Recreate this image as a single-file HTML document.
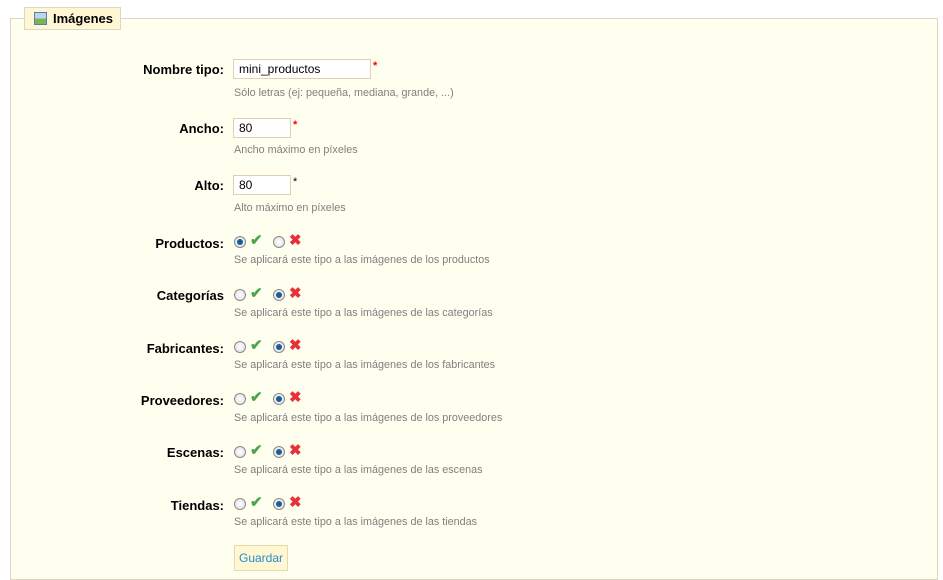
<!DOCTYPE html>
<html><head><meta charset="utf-8"><style>
body{margin:0;width:943px;height:570px;background:#fff;font-family:"Liberation Sans",Arial,sans-serif;position:relative;overflow:hidden}
.fs{position:absolute;left:10px;top:18px;width:926px;height:560px;border:1px solid #dfd5c3;background:#fffff0}
.lg{position:absolute;left:24px;top:7px;width:95px;height:21px;border:1px solid #dfd5c3;background:#fff6d3;font-weight:bold;font-size:13px;color:#000}
.lg span{position:absolute;left:28px;top:3px}
.ic{position:absolute;left:9px;top:4px;width:11px;height:11px;border:1px solid #5a7ea8;background:linear-gradient(#bcd6ef 50%,#7fb35a 50%)}
.l{position:absolute;right:719px;font-weight:bold;font-size:13px;color:#000;white-space:nowrap}
.h{position:absolute;left:234px;font-size:10.8px;color:#7f7f7f;white-space:nowrap}
.in{position:absolute;left:233px;height:18px;border:1px solid #e0d0b1;background:#fff;font-size:12px;line-height:18px;padding-left:5px;box-sizing:content-box}
.st{position:absolute;color:#f00;font-size:11px;font-weight:bold}
.r{position:absolute;width:10px;height:10px;border-radius:50%;border:1px solid #8a8a8a;background:radial-gradient(#fff,#ddd)}
.r.on::after{content:"";position:absolute;left:2px;top:2px;width:6px;height:6px;border-radius:50%;background:#1a5d9a}
.ok{position:absolute;color:#4aa64a;font-size:15px;font-weight:bold}
.no{position:absolute;color:#e8303a;font-size:15px;font-weight:bold}
.btn{position:absolute;left:234px;top:545px;width:52px;height:24px;border:1px solid #e8d9a8;background:#fff6d3;color:#268ccd;font-size:12px;line-height:24px;text-align:center}
</style></head><body>
<div class="fs"></div>
<div class="lg"><div class="ic"></div><span>Imágenes</span></div>

<div class="l" style="top:62px">Nombre tipo:</div>
<div class="in" style="top:59px;width:131px">mini_productos</div>
<div class="st" style="left:373px;top:60px">*</div>
<div class="h" style="top:87px">Sólo letras (ej: pequeña, mediana, grande, ...)</div>

<div class="l" style="top:121px">Ancho:</div>
<div class="in" style="top:118px;width:51px">80</div>
<div class="st" style="left:293px;top:119px">*</div>
<div class="h" style="top:144px">Ancho máximo en píxeles</div>

<div class="l" style="top:178px">Alto:</div>
<div class="in" style="top:175px;width:51px">80</div>
<div class="st" style="left:293px;top:176px;color:#000;font-weight:normal">*</div>
<div class="h" style="top:202px">Alto máximo en píxeles</div>

<div class="l" style="top:236px">Productos:</div>
<div class="r on" style="left:234px;top:236px"></div><div class="ok" style="left:250px;top:231px">✔</div>
<div class="r" style="left:273px;top:236px"></div><div class="no" style="left:289px;top:231px">✖</div>
<div class="h" style="top:254px">Se aplicará este tipo a las imágenes de los productos</div>

<div class="l" style="top:288px">Categorías</div>
<div class="r" style="left:234px;top:289px"></div><div class="ok" style="left:250px;top:284px">✔</div>
<div class="r on" style="left:273px;top:289px"></div><div class="no" style="left:289px;top:284px">✖</div>
<div class="h" style="top:307px">Se aplicará este tipo a las imágenes de las categorías</div>

<div class="l" style="top:341px">Fabricantes:</div>
<div class="r" style="left:234px;top:341px"></div><div class="ok" style="left:250px;top:336px">✔</div>
<div class="r on" style="left:273px;top:341px"></div><div class="no" style="left:289px;top:336px">✖</div>
<div class="h" style="top:359px">Se aplicará este tipo a las imágenes de los fabricantes</div>

<div class="l" style="top:393px">Proveedores:</div>
<div class="r" style="left:234px;top:393px"></div><div class="ok" style="left:250px;top:388px">✔</div>
<div class="r on" style="left:273px;top:393px"></div><div class="no" style="left:289px;top:388px">✖</div>
<div class="h" style="top:412px">Se aplicará este tipo a las imágenes de los proveedores</div>

<div class="l" style="top:445px">Escenas:</div>
<div class="r" style="left:234px;top:446px"></div><div class="ok" style="left:250px;top:441px">✔</div>
<div class="r on" style="left:273px;top:446px"></div><div class="no" style="left:289px;top:441px">✖</div>
<div class="h" style="top:464px">Se aplicará este tipo a las imágenes de las escenas</div>

<div class="l" style="top:498px">Tiendas:</div>
<div class="r" style="left:234px;top:498px"></div><div class="ok" style="left:250px;top:493px">✔</div>
<div class="r on" style="left:273px;top:498px"></div><div class="no" style="left:289px;top:493px">✖</div>
<div class="h" style="top:516px">Se aplicará este tipo a las imágenes de las tiendas</div>

<div class="btn">Guardar</div>
</body></html>
